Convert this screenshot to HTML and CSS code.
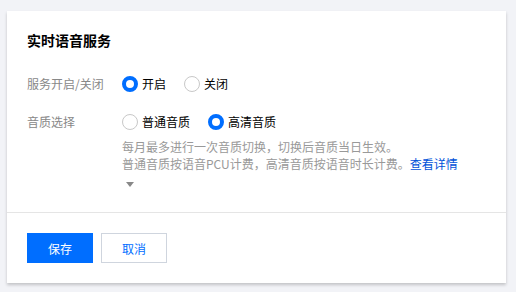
FILE: index.html
```html
<!doctype html>
<html lang="zh-cn">
<head>
    <meta charset="utf-8" />
    <meta name="viewport" content="width=device-width, initial-scale=1" />
    <link rel="stylesheet" href="styles.css">
    <title>实时语音服务</title>
</head>
<body>
    <div class="card">
        <div class="card-body">
            <h3 class="card-title">实时语音服务</h3>

            <div class="form-row">
                <label class="form-label">服务开启/关闭</label>
                <div class="form-ctrl">
                    <div class="radio-group">
                        <span class="radio checked"><i></i>开启</span>
                        <span class="radio"><i></i>关闭</span>
                    </div>
                </div>
            </div>

            <div class="form-row row-quality">
                <label class="form-label">音质选择</label>
                <div class="form-ctrl">
                    <div class="radio-group">
                        <span class="radio"><i></i>普通音质</span>
                        <span class="radio checked"><i></i>高清音质</span>
                    </div>
                    <p class="hint">每月最多进行一次音质切换，切换后音质当日生效。<br>普通音质按语音PCU计费，高清音质按语音时长计费。<a class="link" href="#">查看详情</a></p>
                    <div class="more"><span class="caret"></span></div>
                </div>
            </div>
        </div>
        <footer class="card-footer">
            <button class="btn btn-primary">保存</button>
            <button class="btn">取消</button>
        </footer>
    </div>
</body>
</html>
```

FILE: styles.css
```css
html, body {
    height: 100%;
}
body {
    margin: 0;
    padding: 0;
    background: #f2f3f7;
    font-family: "Noto Sans CJK SC", "Noto Sans", sans-serif;
    font-size: 12px;
    color: #000;
}
.card {
    margin: 11px 0 0 7px;
    width: 499px;
    background: #fff;
    box-shadow: 0 2px 3px rgba(0, 0, 0, .2);
}
.card-body {
    padding: 18px 20px 24px;
}
.card-title {
    margin: 0;
    font-size: 14px;
    line-height: 22px;
    font-weight: bold;
}
.form-row {
    display: flex;
    margin-top: 21px;
}
.row-quality {
    margin-top: 14px;
}
.form-label {
    width: 95px;
    flex: none;
    line-height: 24px;
    color: #888;
}
.form-ctrl {
    flex: 1;
}
.radio-group {
    display: flex;
    gap: 18px;
    height: 24px;
    align-items: center;
}
.radio {
    display: flex;
    align-items: center;
    gap: 4px;
    line-height: 24px;
}
.radio i {
    width: 16px;
    height: 16px;
    box-sizing: border-box;
    border: 1px solid #c8c8c8;
    border-radius: 50%;
    background: #fff;
}
.radio.checked i {
    border: 4px solid #006eff;
}
.hint {
    margin: 4px 0 0;
    line-height: 17px;
    color: #999;
}
.link {
    color: #0052d9;
    text-decoration: none;
}
.more {
    padding: 10px 0 0 4px;
    height: 6px;
}
.caret {
    display: block;
    width: 0;
    height: 0;
    border-left: 4px solid transparent;
    border-right: 4px solid transparent;
    border-top: 5px solid #888;
}
.card-footer {
    border-top: 1px solid #e5e5e5;
    padding: 20px;
    display: flex;
    gap: 8px;
}
.btn {
    width: 66px;
    height: 30px;
    box-sizing: border-box;
    border: 1px solid #cfd5de;
    background: #fff;
    color: #006eff;
    font-family: inherit;
    font-size: 12px;
    padding: 0;
    cursor: pointer;
}
.btn-primary {
    background: #006eff;
    border-color: #006eff;
    color: #fff;
}
```
